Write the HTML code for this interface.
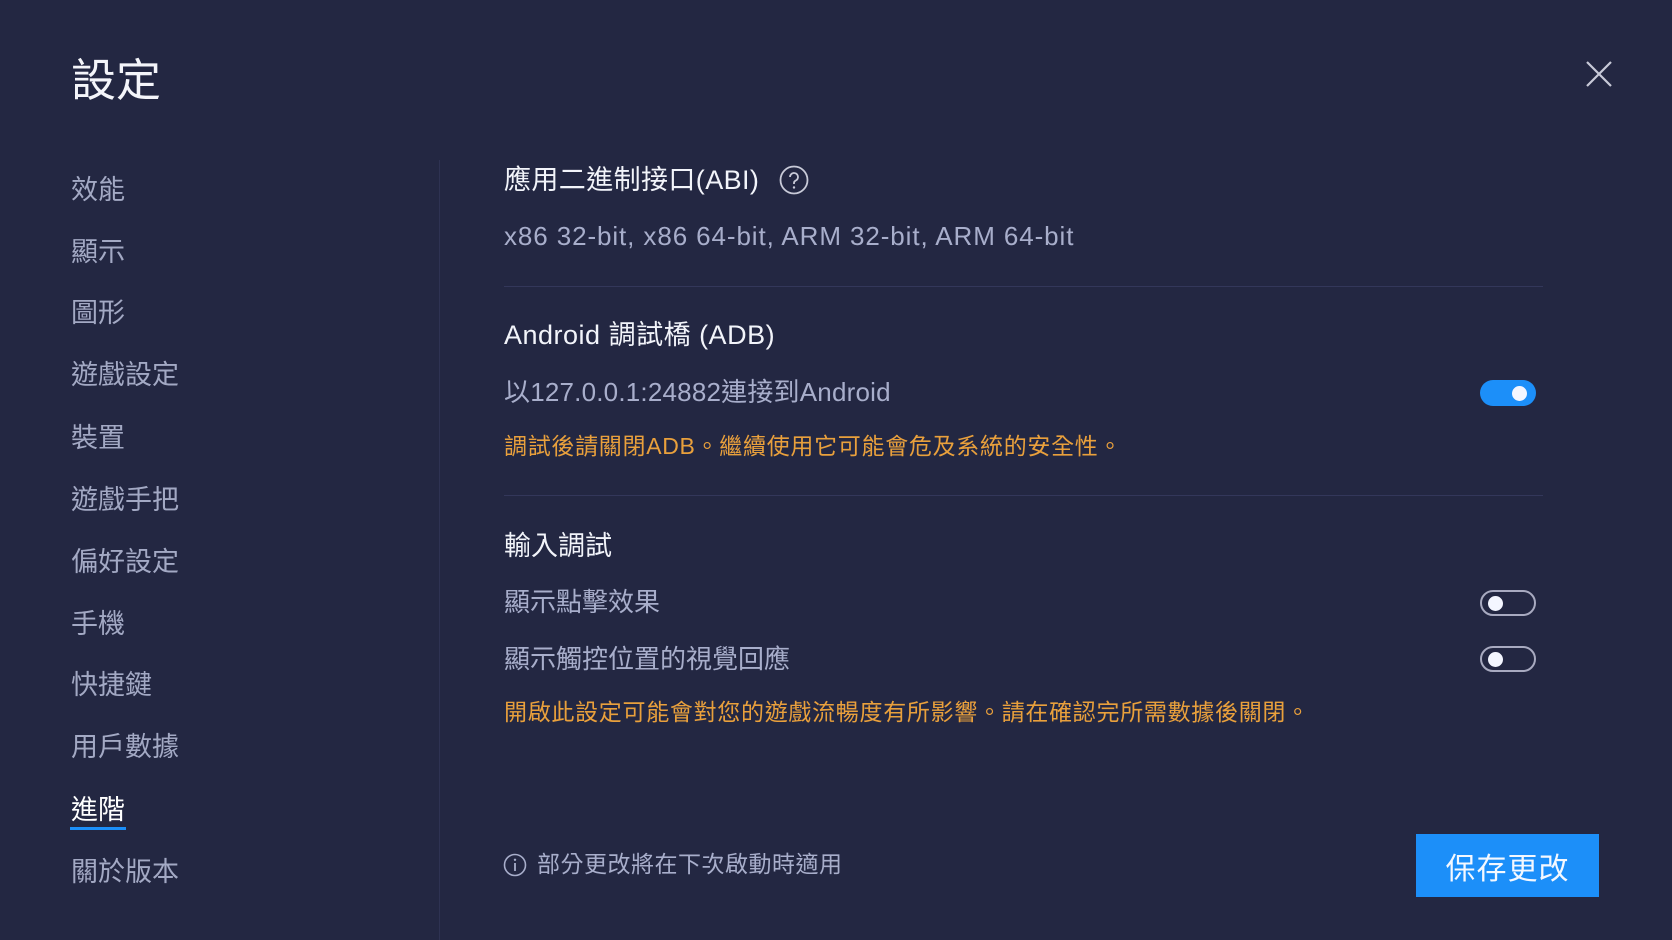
<!DOCTYPE html>
<html><head><meta charset="utf-8"><style>
*{margin:0;padding:0;box-sizing:border-box}
body{width:1672px;height:940px;background:#232742;font-family:"Liberation Sans","Noto Sans CJK TC",sans-serif;position:relative;overflow:hidden;color:#fff}
.a{position:absolute;white-space:nowrap;line-height:1}
.nav{left:71px;font-size:27px;color:#a3a9c4}
.h{left:504px;font-size:27px;color:#f2f4fa}
.t{left:504px;font-size:26px;color:#a8aecb}
.o{left:504px;font-size:23px;color:#e9a03c;letter-spacing:0.7px}
.hr{position:absolute;left:504px;width:1039px;height:1px;background:#33375a}
.tg{position:absolute;left:1480px;width:56px;height:26px;border-radius:13px}
.off{border:2px solid #a8aac0}
.off::after{content:"";position:absolute;left:6px;top:4px;width:15px;height:15px;border-radius:50%;background:#f4f6ff}
.on{background:#1c8ff9}
.on::after{content:"";position:absolute;right:9px;top:6px;width:15px;height:15px;border-radius:50%;background:#f4f6ff}
</style></head><body>
<div class="a" style="left:71px;top:58px;font-size:45px;color:#f4f5fa">設定</div>
<svg class="a" style="left:1585px;top:60px" width="28" height="28" viewBox="0 0 28 28"><path d="M2 2L26 26M26 2L2 26" stroke="#c8cad8" stroke-width="2.2"/></svg>
<div class="a nav" style="top:177px">效能</div>
<div class="a nav" style="top:239px">顯示</div>
<div class="a nav" style="top:300px">圖形</div>
<div class="a nav" style="top:362px">遊戲設定</div>
<div class="a nav" style="top:425px">裝置</div>
<div class="a nav" style="top:487px">遊戲手把</div>
<div class="a nav" style="top:549px">偏好設定</div>
<div class="a nav" style="top:611px">手機</div>
<div class="a nav" style="top:672px">快捷鍵</div>
<div class="a nav" style="top:734px">用戶數據</div>
<div class="a nav" style="top:797px;color:#fff">進階</div>
<div style="position:absolute;left:70px;top:827px;width:56px;height:3px;background:#1c8ff9"></div>
<div class="a nav" style="top:859px">關於版本</div>
<div style="position:absolute;left:439px;top:160px;width:1px;height:780px;background:#2e3252"></div>

<div class="a h" style="top:167px;letter-spacing:0.4px">應用二進制接口(ABI)</div>
<svg class="a" style="left:779px;top:165px" width="30" height="30" viewBox="0 0 30 30"><circle cx="15" cy="15" r="13.5" fill="none" stroke="#c8cad8" stroke-width="1.8"/><path d="M11 12a4 4 0 1 1 5.5 3.7c-1 .5-1.5 1.2-1.5 2.3v1" fill="none" stroke="#c8cad8" stroke-width="1.8"/><circle cx="15" cy="22.5" r="1.2" fill="#c8cad8"/></svg>
<div class="a t" style="top:223px;letter-spacing:0.9px">x86 32-bit, x86 64-bit, ARM 32-bit, ARM 64-bit</div>
<div class="hr" style="top:286px"></div>
<div class="a h" style="top:322px;letter-spacing:0.5px">Android 調試橋 (ADB)</div>
<div class="a t" style="top:379px;letter-spacing:0.2px">以127.0.0.1:24882連接到Android</div>
<div class="tg on" style="top:380px"></div>
<div class="a o" style="top:435px">調試後請關閉ADB。繼續使用它可能會危及系統的安全性。</div>
<div class="hr" style="top:495px"></div>
<div class="a h" style="top:533px">輸入調試</div>
<div class="a t" style="top:589px">顯示點擊效果</div>
<div class="tg off" style="top:590px"></div>
<div class="a t" style="top:646px">顯示觸控位置的視覺回應</div>
<div class="tg off" style="top:646px"></div>
<div class="a o" style="top:701px">開啟此設定可能會對您的遊戲流暢度有所影響。請在確認完所需數據後關閉。</div>

<svg class="a" style="left:503px;top:853px" width="24" height="24" viewBox="0 0 24 24"><circle cx="12" cy="12" r="10.5" fill="none" stroke="#a8aecb" stroke-width="1.6"/><path d="M12 10v8" stroke="#a8aecb" stroke-width="1.8"/><circle cx="12" cy="6.8" r="1.2" fill="#a8aecb"/></svg>
<div class="a" style="left:537px;top:853px;font-size:23px;color:#a8aecb;letter-spacing:0.5px">部分更改將在下次啟動時適用</div>
<div style="position:absolute;left:1416px;top:834px;width:183px;height:63px;background:#1c8ff9;color:#f4f8ff;font-size:30px;display:flex;align-items:center;justify-content:center;letter-spacing:1px">保存更改</div>
</body></html>
